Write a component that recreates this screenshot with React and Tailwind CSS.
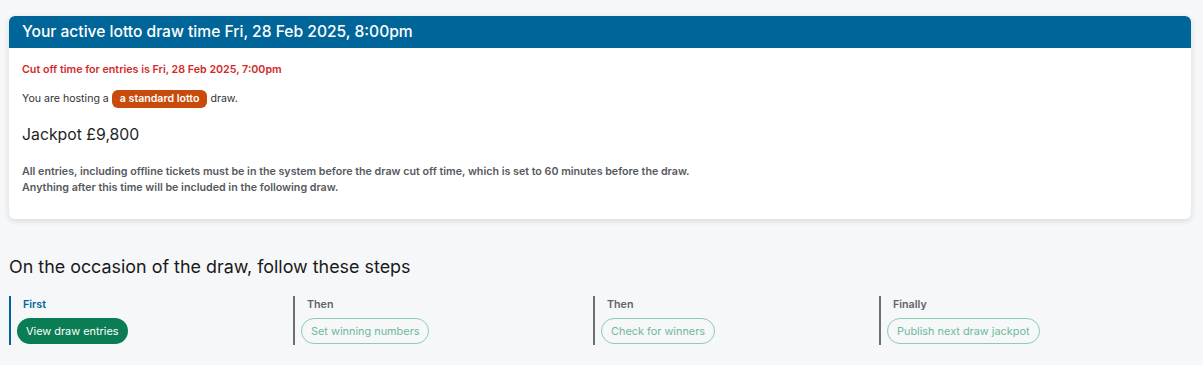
export default function App() {
    const steps = [
        { label: 'First', text: 'View draw entries', active: true, w: 'w-[284px]' },
        { label: 'Then', text: 'Set winning numbers', w: 'w-[300px]' },
        { label: 'Then', text: 'Check for winners', w: 'w-[286px]' },
        { label: 'Finally', text: 'Publish next draw jackpot', w: 'flex-1' },
    ];

    return (
        <div className="min-h-screen bg-[#f6f7f9] pl-[9px] pr-[12px] pt-4" style={{ fontFamily: 'Inter, "Noto Sans", sans-serif' }}>
            {/* Draw card */}
            <div className="bg-white rounded-md shadow-[0_2px_6px_rgba(0,0,0,0.12)] overflow-hidden">
                <div className="bg-[#00669a] h-8 flex items-center px-[13px]">
                    <h1 className="text-white text-[15.6px] font-medium leading-none">
                        Your active lotto draw time Fri, 28 Feb 2025, 8:00pm
                    </h1>
                </div>
                <div className="px-[13px] pt-[14px] pb-[23px]">
                    <p className="text-[#d12b2b] text-[10.7px] font-semibold leading-4">
                        Cut off time for entries is Fri, 28 Feb 2025, 7:00pm
                    </p>
                    <p className="mt-[12px] text-[10.6px] text-[#333] flex items-center leading-4">
                        You are hosting a
                        <span className="mx-[3px] inline-flex items-center h-[18px] px-[8px] rounded-md bg-[#c84b0c] text-white font-semibold">
                            a standard lotto
                        </span>
                        draw.
                    </p>
                    <p className="mt-[15px] text-[15.8px] text-[#1f1f1f] leading-6">Jackpot £9,800</p>
                    <div className="mt-[17px] text-[10.7px] font-semibold text-[#555a60] leading-4">
                        <p>All entries, including offline tickets must be in the system before the draw cut off time, which is set to 60 minutes before the draw.</p>
                        <p>Anything after this time will be included in the following draw.</p>
                    </div>
                </div>
            </div>

            {/* Steps */}
            <h2 className="mt-[36px] text-[17.9px] text-[#1a1a1a] leading-6">On the occasion of the draw, follow these steps</h2>
            <div className="mt-[17px] flex">
                {steps.map((s, i) => (
                    <div key={i} className={s.w}>
                        <div className={`border-l-2 pl-[6px] h-[49px] ${s.active ? 'border-[#00669a]' : 'border-[#6b7078]'}`}>
                            <div className={`pl-[6px] pt-[1px] text-[10.7px] font-semibold leading-4 ${s.active ? 'text-[#00669a]' : 'text-[#5f6368]'}`}>
                                {s.label}
                            </div>
                            <button
                                className={`mt-[5px] h-[26px] px-[9px] rounded-full text-[10.9px] leading-none ${
                                    s.active
                                        ? 'bg-[#0a7d55] text-white'
                                        : 'border border-[#8ecbb5] text-[#6fb99c] bg-transparent'
                                }`}
                            >
                                {s.text}
                            </button>
                        </div>
                    </div>
                ))}
            </div>
        </div>
    );
}
